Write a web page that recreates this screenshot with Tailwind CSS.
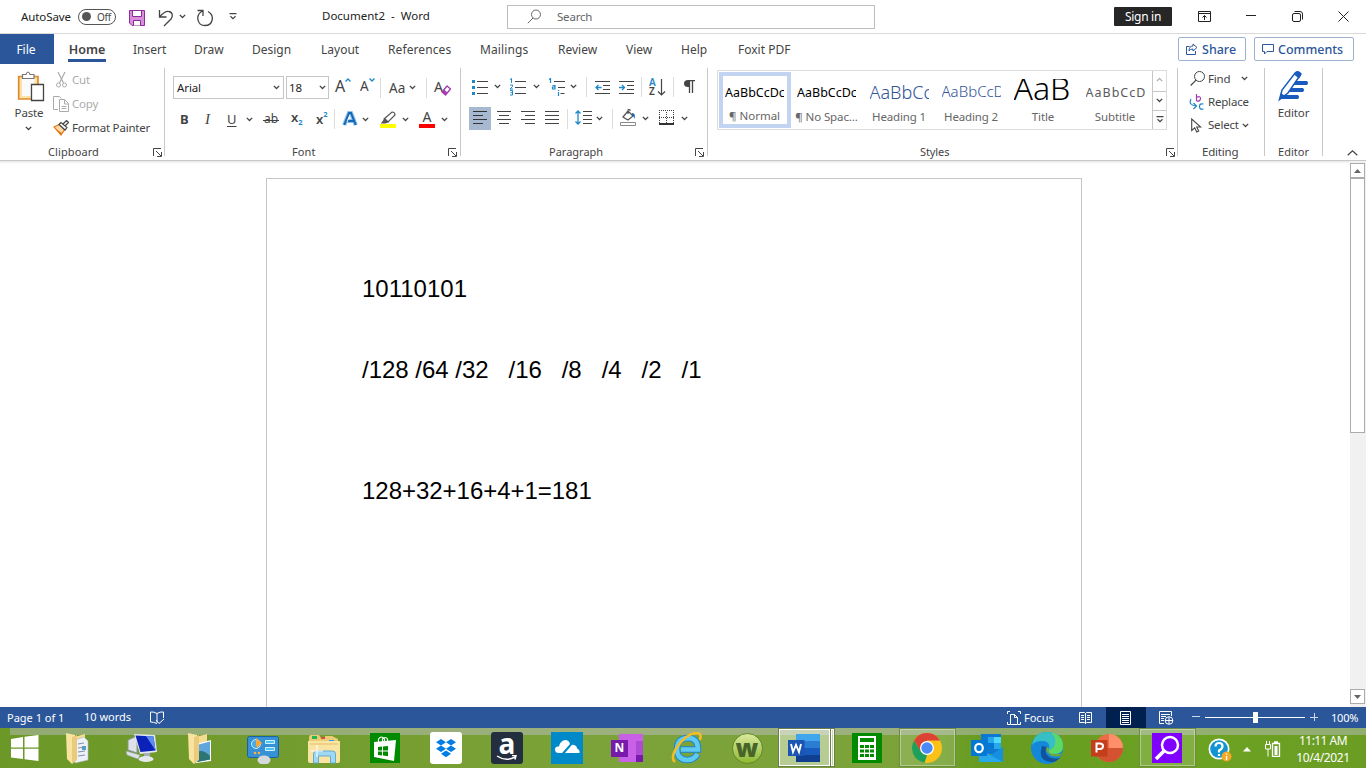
<!DOCTYPE html>
<html lang="en">
<head>
<meta charset="utf-8">
<title>Document2 - Word</title>
<script src="https://cdn.jsdelivr.net/npm/@tailwindcss/browser@4"></script>
</head>
<body class="w-[1366px] h-[768px] overflow-hidden bg-white font-['Noto_Sans','Open_Sans',sans-serif] text-[12px] leading-4 text-[#444] flex flex-col whitespace-nowrap">
<svg class="hidden">
  <symbol id="chev" viewBox="0 0 7 5"><path d="M.8 .9 3.5 3.5 6.2 .9" fill="none" stroke="#444" stroke-width="1.3"/></symbol>
  <symbol id="launch" viewBox="0 0 9 9"><path d="M.5 8V.5H8M3 3l5 5M8.500 4v4.500H4" fill="none" stroke="#444"/></symbol>
</svg>

<!-- Title bar -->
<header class="flex h-[34px] shrink-0 items-center border-b border-[#dadada] text-[11px] text-[#222]">
  <span class="ml-[21px] w-[57px] text-[11.500px] tracking-[-0.1px]">AutoSave</span>
  <span class="flex h-4 w-[38px] items-center rounded-full border border-[#555] pl-[3px]"><i class="size-[9px] rounded-full bg-[#555]"></i><span class="ml-[6px] text-[10px] tracking-[-0.3px] text-[#444]">Off</span></span>
  <svg class="ml-[13px] mt-[2px]" width="16" height="16"><path d="M.5 .5h15v15H3L.5 13z" fill="#d78fdc" stroke="#8e2b9c"/><path d="M3.500 .5h9v6h-9zM4.500 15.500v-5h7v5" fill="#fff" stroke="#8e2b9c"/></svg>
  <svg class="ml-[13px] mt-[2px]" width="17" height="18"><path d="M1.500 1v7h7M1.500 8C5 4 8 1.500 11 2.500c4 1 4 5 2 7.500l-7 7" fill="none" stroke="#444" stroke-width="1.300"/></svg>
  <svg class="ml-[4px]" width="7" height="5"><use href="#chev"/></svg>
  <svg class="ml-[10px] mt-[2px]" width="18" height="18"><path d="M1.500 1.500H7V7M6.500 2C-1 6 1 16.500 9 16.500c8 0 10-10 3-14" fill="none" stroke="#444" stroke-width="1.300"/></svg>
  <svg class="ml-[15px]" width="8" height="7"><path d="M.5 .6h7M1.500 3.200 4 5.600 6.500 3.200" fill="none" stroke="#444" stroke-width="1.200"/></svg>
  <span class="ml-[85px] mb-px w-[185px] whitespace-pre text-[11.500px]">Document2  -  Word</span>
  <div class="flex h-6 w-[368px] items-center border border-[#bdbdbd] text-[#666]">
    <svg class="ml-[19px]" width="15" height="15"><circle cx="9" cy="5.500" r="4.500" fill="none" stroke="#666"/><path d="M6 9 .8 14.200" stroke="#666"/></svg>
    <span class="ml-[15px] text-[11.500px] tracking-[-0.2px]">Search</span>
  </div>
  <span class="ml-[239px] flex h-[19px] w-[58px] items-center justify-center rounded-[1px] bg-[#262626] text-[12px] tracking-[-0.3px] text-white">Sign in</span>
  <svg class="ml-[26px]" width="13" height="11"><path d="M.5 .5h12v10H.5zM.5 2.500h12M6.500 9V4.500M4.500 6.500l2-2 2 2" fill="none" stroke="#222"/></svg>
  <svg class="ml-[35px]" width="10" height="10"><path d="M0 3.500h10" stroke="#222"/></svg>
  <svg class="ml-[36px] mb-px" width="11" height="11"><rect x=".5" y="2.500" width="8" height="8" rx="1.500" fill="none" stroke="#222"/><path d="M2.500 .5h5.500q2.500 0 2.500 2.500v5.500" fill="none" stroke="#222"/></svg>
  <svg class="ml-[35px] mb-px" width="11" height="11"><path d="M.5 .5l10 10M10.500 .5l-10 10" stroke="#222"/></svg>
</header>

<!-- Tabs -->
<nav class="flex h-[30px] shrink-0 items-center">
  <span class="flex h-full w-[54px] items-center justify-center bg-[#2b579a] pr-[2px] pt-px text-white">File</span>
  <span class="ml-[14px] mr-[27px] flex h-full w-[38px] flex-col items-center"><b class="mt-[8px] h-[17px] text-[12.500px] font-semibold">Home</b><i class="h-[3px] w-[38px] bg-[#2b579a]"></i></span>
  <span class="flex pt-[2px]"><span class="w-[61px]">Insert</span><span class="w-[58px]">Draw</span><span class="w-[69px]">Design</span><span class="w-[67px]">Layout</span><span class="w-[92px] tracking-[0.1px]">References</span><span class="w-[78px] tracking-[0.1px]">Mailings</span><span class="w-[68px]">Review</span><span class="w-[55px]">View</span><span class="w-[57px]">Help</span><span class="w-[440px]">Foxit PDF</span></span>
  <span class="flex h-6 w-[68px] items-center rounded-[2px] border border-[#9db2d2] pl-[7px] font-medium text-[#2b579a]"><svg width="12" height="12"><path d="M3.500 3.500h-3v8h9V8M7 1l4 3.500L7 8V6Q4 6 3 8q0-5 4-5z" fill="none" stroke="#2b579a"/></svg><span class="ml-1 pt-px text-[12.500px]">Share</span></span>
  <span class="ml-2 flex h-6 w-[100px] items-center rounded-[2px] border border-[#9db2d2] pl-[7px] font-medium text-[#2b579a]"><svg width="12" height="12"><path d="M.5 1.500h11v7H5L2.500 11V8.500h-2z" fill="none" stroke="#2b579a"/></svg><span class="ml-1 pt-px text-[12.500px]">Comments</span></span>
</nav>

<!-- Ribbon -->
<section class="flex h-[97px] shrink-0 border-b border-[#c8c8c8] pt-1 text-[11px]">
  <!-- Clipboard -->
  <div class="flex h-[88px] w-[165px] flex-col border-r border-[#c8c8c8]">
    <div class="flex h-[76px] shrink-0">
      <div class="flex w-[52px] flex-col items-center pl-[6px] pt-[3px]">
        <svg class="ml-[4px] shrink-0" width="28" height="32"><path d="M1.700 5.500h19.300v22.500H1.700z" fill="#fbe3a8" stroke="#e08a2c" stroke-width="1.700"/><path d="M5 8h12.500v17H5z" fill="#fafafa"/><path d="M5.500 7.500v-4h3.500q2-5 4 0h4v4z" fill="#fff" stroke="#777" stroke-width="1.200"/><path d="M14.500 13.500h12v16h-12z" fill="#fff" stroke="#444" stroke-width="1.300"/></svg>
        <span class="mt-[2px] text-[11.500px] tracking-[-0.15px]">Paste</span>
        <svg class="mt-[5px] mr-[2px]" width="7" height="5"><use href="#chev"/></svg>
      </div>
      <div class="flex flex-col text-[11.500px] tracking-[-0.2px]">
        <div class="flex h-6 items-center text-[#ababab]"><svg class="ml-1 mr-[5px]" width="11" height="16"><path d="M2 0l5.500 11M9 0 3.500 11" stroke="#ababab" stroke-width="1.200"/><circle cx="2.500" cy="13" r="2" fill="none" stroke="#ababab"/><circle cx="8.500" cy="13" r="2" fill="none" stroke="#ababab"/></svg>Cut</div>
        <div class="flex h-6 items-center text-[#ababab]"><svg class="ml-[1px] mr-[3px]" width="16" height="16"><path d="M5 13.500H.5V.5h6l2 2M6.500 3.500h5l4 4v8h-9zM11.500 4v4h4M8.500 10.500h5M8.500 12.500h5" fill="none" stroke="#ababab"/></svg>Copy</div>
        <div class="flex h-6 items-center"><svg class="ml-[1px] mr-[3px]" width="16" height="16"><path d="M1 7l6-3 5 5-4 6z" fill="#fcd9a5" stroke="#e07b1a" stroke-width="1.200"/><path d="M3 9l6 4-1 2z" fill="#e07b1a"/><path d="M6 4.500l2-2 6 5-2 2.500zM10 4l3.500-3.500 2 1.800-3 3.200" fill="#fff" stroke="#444" stroke-width="1.200"/></svg>Format Painter</div>
      </div>
    </div>
    <div class="flex items-center pl-12"><span class="w-[105px] tracking-[0.1px]">Clipboard</span><svg width="9" height="9"><use href="#launch"/></svg></div>
  </div>

  <!-- Font -->
  <div class="flex h-[88px] w-[296px] flex-col border-r border-[#c8c8c8]">
    <div class="mt-2 flex h-[23px] shrink-0 items-center pl-2">
      <div class="flex h-[23px] w-[111px] items-center border border-[#c6c6c6] px-[3px] text-[#222]"><span class="w-[100px] tracking-[-0.1px] text-[11.500px]">Arial</span><svg width="7" height="5" class="shrink-0"><use href="#chev"/></svg></div>
      <div class="ml-[2px] flex h-[23px] w-[43px] items-center border border-[#c6c6c6] pl-[2px] text-[#222]"><span class="w-[30px] text-[11.500px] tracking-[-0.2px]">18</span><svg width="7" height="5" class="shrink-0"><use href="#chev"/></svg></div>
      <div class="ml-[6px] mb-[3px] flex h-5 w-[25px] leading-5"><span class="text-[16px]">A</span><svg class="mt-[2px]" width="6" height="4"><path d="M.5 3.500 3 1l2.500 2.500" fill="none" stroke="#1e88c9" stroke-width="1.300"/></svg></div>
      <div class="mb-[3px] flex h-5 w-[20px] leading-5"><span class="text-[13.500px]">A</span><svg class="mt-[2px]" width="6" height="4"><path d="M.5 .5 3 3 5.500 .5" fill="none" stroke="#1e88c9" stroke-width="1.300"/></svg></div>
      <i class="h-5 w-px bg-[#dcdcdc]"></i>
      <span class="ml-[8px] w-[20px] text-[13.500px]">Aa</span><svg width="7" height="5"><use href="#chev"/></svg>
      <i class="ml-[10px] h-5 w-px bg-[#dcdcdc]"></i>
      <div class="ml-[7px] mb-px flex"><span class="w-[7px] text-[14px]">A</span><svg class="mt-[5px]" width="10" height="12"><path d="M1 8l5-6 3.500 3-5 6z" fill="#fff" stroke="#a33fb0" stroke-width="1.400"/><path d="M1 8l2-2.400 3.500 3-2 2.400z" fill="#a33fb0"/></svg></div>
    </div>
    <div class="mt-[8px] flex h-6 shrink-0 items-center pl-[15px] text-[13px]">
      <b class="w-6 pb-px">B</b><span class="w-[22px] pb-px pl-px font-['Liberation_Serif',serif] text-[15px] italic">I</span><span class="w-[20px] pb-px pl-px underline underline-offset-2">U</span><svg width="7" height="5"><use href="#chev"/></svg>
      <span class="ml-[10px] flex w-[28px]"><span class="w-[16px] bg-[linear-gradient(#444,#444)] bg-[length:100%_1px] bg-[position:0_9px] bg-no-repeat text-center text-[12px]">ab</span></span>
      <span class="flex w-[25px]"><b class="font-semibold">x</b><span class="mt-[5px] text-[7.500px] font-bold text-[#1e88c9]">2</span></span>
      <span class="flex w-[18px]"><b class="font-semibold">x</b><span class="mt-[-5px] text-[7.500px] font-bold text-[#1e88c9]">2</span></span>
      <i class="h-5 w-px bg-[#dcdcdc]"></i>
      <svg class="ml-[7px]" width="16" height="16"><path d="M2.200 14 7 2h2l4.800 12M4.500 10h7" fill="none" stroke="#8cc0ea" stroke-width="4.200"/><path d="M2.200 14 7 2h2l4.800 12M4.500 10h7" fill="none" stroke="#1467b5" stroke-width="2"/><path d="M8 4 5 11" stroke="#fff" stroke-width="1"/></svg>
      <svg class="ml-1" width="7" height="5"><use href="#chev"/></svg>
      <svg class="ml-[11px]" width="16" height="17"><path d="M4 8l8-7q3 0 3 3L8 11H5zM5 8l3 3-3 1H2z" fill="#fff" stroke="#555" stroke-width="1.200"/><path d="M5 7.500 8.500 11 6 12H2z" fill="#555"/><path d="M0 13h16v4H0z" fill="#ff0"/></svg>
      <svg class="ml-[6px]" width="7" height="5"><use href="#chev"/></svg>
      <span class="ml-[10px] flex h-[17px] w-4 flex-col items-center"><span class="h-[13px] text-[14px] leading-[11px]">A</span><i class="h-1 w-4 bg-[#f00]"></i></span>
      <svg class="ml-[6px]" width="7" height="5"><use href="#chev"/></svg>
    </div>
    <div class="mt-[13px] flex items-center pl-[127px]"><span class="w-[156px] tracking-[0.1px]">Font</span><svg width="9" height="9"><use href="#launch"/></svg></div>
  </div>

  <!-- Paragraph -->
  <div class="flex h-[88px] w-[247px] flex-col border-r border-[#c8c8c8]">
    <div class="mt-[7px] flex h-[23px] shrink-0 items-center pl-[11px]">
      <svg width="16" height="16"><path d="M5 2.500h11M5 8.500h11M5 14.500h11" stroke="#444"/><path d="M0 1h3v3H0zM0 7h3v3H0zM0 13h3v3H0z" fill="#1e88c9"/></svg><svg class="ml-[6px]" width="7" height="5"><use href="#chev"/></svg>
      <svg class="ml-[9px]" width="16" height="18"><path d="M5 3.500h11M5 9.500h11M5 15.500h11" stroke="#444"/><path d="M0 1.500l1.500-1V5M0 7h2.500v1.500L0 11h3M0 12.500h2.500V17H0M.5 14.700h2" fill="none" stroke="#1e88c9"/></svg><svg class="ml-[7px]" width="7" height="5"><use href="#chev"/></svg>
      <svg class="ml-[9px]" width="16" height="18"><path d="M5 3.500h11M9 9.500h7M11.500 15.500h4" stroke="#444"/><path d="M0 1.500l1.500-1V5M3.500 7.500H6V11H3.500V9H6M9.500 12v1M9.500 14v4" fill="none" stroke="#1e88c9" stroke-width="1.200"/></svg><svg class="ml-[5px]" width="7" height="5"><use href="#chev"/></svg>
      <i class="ml-[9px] h-5 w-px bg-[#dcdcdc]"></i>
      <svg class="ml-2" width="15" height="14"><path d="M0 1.500h15M8 5.500h7M8 9.500h7M0 13.500h15" stroke="#444"/><path d="M6.500 7.500H1M3.500 5 1 7.500 3.500 10" fill="none" stroke="#1e88c9" stroke-width="1.300"/></svg>
      <svg class="ml-[9px]" width="15" height="14"><path d="M0 1.500h15M8 5.500h7M8 9.500h7M0 13.500h15" stroke="#444"/><path d="M0 7.500h5.500M3 5l2.500 2.500L3 10" fill="none" stroke="#1e88c9" stroke-width="1.300"/></svg>
      <i class="ml-[7px] h-5 w-px bg-[#dcdcdc]"></i>
      <div class="ml-[7px] flex"><span class="flex w-[8px] flex-col text-[10px] font-semibold leading-[9px]"><span class="text-[#1e88c9]">A</span><span>Z</span></span><svg class="mt-px" width="9" height="17"><path d="M4.500 0v16M1 12.500 4.500 16 8 12.500" fill="none" stroke="#444" stroke-width="1.200"/></svg></div>
      <i class="ml-[7px] h-5 w-px bg-[#dcdcdc]"></i>
      <svg class="ml-[10px] mb-px" width="11" height="13"><path d="M5.500 0v13M8.500 0v13M4 .6h7" stroke="#444" stroke-width="1.300"/><path d="M6 0v7H4Q0 7 0 3.500T4 0z" fill="#444"/></svg>
    </div>
    <div class="mt-[9px] flex h-[23px] shrink-0 items-center pl-2">
      <span class="flex h-[23px] w-[22px] items-center justify-center bg-[#a6b9d1] pb-[2px]"><svg width="14" height="13"><path d="M0 .5h14M0 4.500h10M0 8.500h14M0 12.500h10" stroke="#333"/></svg></span>
      <svg class="mb-[2px] ml-[6px]" width="14" height="13"><path d="M0 .5h14M2 4.500h10M0 8.500h14M2 12.500h10" stroke="#444"/></svg>
      <svg class="mb-[2px] ml-[10px]" width="14" height="13"><path d="M0 .5h14M4 4.500h10M0 8.500h14M4 12.500h10" stroke="#444"/></svg>
      <svg class="mb-[2px] ml-[10px]" width="14" height="13"><path d="M0 .5h14M0 4.500h14M0 8.500h14M0 12.500h14" stroke="#444"/></svg>
      <i class="ml-[8px] h-5 w-px bg-[#dcdcdc]"></i>
      <svg class="mb-[2px] ml-[7px]" width="17" height="15"><path d="M8 1.500h9M8 5.500h9M8 9.500h9M8 13.500h9" stroke="#444"/><path d="M3 1v13M.5 3.500 3 1l2.500 2.500M.5 11.500 3 14l2.500-2.500" fill="none" stroke="#1e88c9" stroke-width="1.300"/></svg>
      <svg class="ml-[4px]" width="7" height="5"><use href="#chev"/></svg>
      <i class="ml-[9px] h-5 w-px bg-[#dcdcdc]"></i>
      <svg class="mb-[2px] ml-[7px]" width="17" height="17"><path d="M3 8l5-6 5 5-5 4zM8 5V1q2-2 2 1" fill="#fff" stroke="#555" stroke-width="1.200"/><path d="M12 4q4 0 2.500 6-1-4-2.500-3z" fill="#1565b0"/><path d="M.5 13.500h15v3H.5z" fill="#fff" stroke="#888"/></svg>
      <svg class="ml-[5px]" width="7" height="5"><use href="#chev"/></svg>
      <svg class="mb-[2px] ml-[10px]" width="15" height="15"><path d="M.5 0v13M14.500 0v13M0 .5h15M7.500 2v11M0 7.500h15" stroke="#444" stroke-dasharray="1 1"/><path d="M0 14h15" stroke="#000" stroke-width="1.600"/></svg>
      <svg class="ml-[7px]" width="7" height="5"><use href="#chev"/></svg>
    </div>
    <div class="mt-[14px] flex items-center pl-[88px]"><span class="w-[146px]">Paragraph</span><svg width="9" height="9"><use href="#launch"/></svg></div>
  </div>

  <!-- Styles -->
  <div class="flex h-[88px] w-[470px] flex-col border-r border-[#c8c8c8] pl-[9px]">
    <div class="mt-[2px] flex h-[60px] w-[450px] shrink-0 border border-[#dcdcdc] pl-px text-[11.500px] text-[#666]">
      <div class="mt-px flex h-[56px] w-[72px] flex-col items-center border-4 border-[#c2d4f2]"><span class="mr-px mt-[6px] h-[27px] w-[59px] overflow-hidden text-[12.500px] leading-[22px] text-black">AaBbCcDc</span><span class="mr-px">¶ Normal</span></div>
      <div class="flex w-[72px] flex-col items-center pt-[11px] pr-px"><span class="h-[27px] w-[59px] overflow-hidden text-[12.500px] leading-[22px] text-black">AaBbCcDc</span><span class="tracking-[-0.1px]">¶ No Spac...</span></div>
      <div class="flex w-[72px] flex-col items-center pt-[10px]"><span class="h-[28px] w-[59px] overflow-hidden text-[18px] font-light leading-[22px] text-[#2f5496]">AaBbCc</span><span class="tracking-[-0.15px]">Heading 1</span></div>
      <div class="flex w-[72px] flex-col items-center pt-[11px]"><span class="h-[27px] w-[59px] overflow-hidden text-[15px] font-light leading-[19px] text-[#2f5496]">AaBbCcD</span><span class="tracking-[-0.15px]">Heading 2</span></div>
      <div class="flex w-[72px] flex-col items-center pt-[8px]"><span class="h-[30px] w-[59px] overflow-hidden text-[32px] font-light leading-[18px] text-black">AaB</span><span class="tracking-[-0.1px]">Title</span></div>
      <div class="flex w-[73px] flex-col items-center pr-px pt-[11px]"><span class="h-[27px] w-[59px] overflow-hidden text-[12.500px] leading-[22px] tracking-[1px] text-[#5a5a5a]">AaBbCcD</span><span class="tracking-[-0.1px]">Subtitle</span></div>
      <div class="flex w-[14px] flex-col border-l border-[#c6c6c6]">
        <span class="flex h-5 items-center justify-center pb-[3px]"><svg class="rotate-180 opacity-40" width="7" height="5"><use href="#chev"/></svg></span>
        <span class="flex h-5 items-center justify-center border-y border-[#c6c6c6] pb-px"><svg width="7" height="5"><use href="#chev"/></svg></span>
        <span class="flex h-[18px] items-center justify-center pb-[2px]"><svg width="8" height="7"><path d="M.5 .6h7M1.500 3.200 4 5.600 6.500 3.200" fill="none" stroke="#444" stroke-width="1.200"/></svg></span>
      </div>
    </div>
    <div class="mt-[14px] flex items-center pl-[203px]"><span class="w-[246px] tracking-[-0.1px]">Styles</span><svg width="9" height="9"><use href="#launch"/></svg></div>
  </div>

  <!-- Editing -->
  <div class="flex h-[88px] w-[87px] flex-col border-r border-[#c8c8c8] text-[11.500px] tracking-[-0.2px]">
    <div class="flex h-[21px] shrink-0 items-center pl-[12px]"><svg width="15" height="15" class="mr-[3px]"><circle cx="9.500" cy="5.500" r="5" fill="none" stroke="#444"/><path d="M6 9.200 .7 14.500" stroke="#444" stroke-width="1.200"/></svg><span class="w-[33px]">Find</span><svg width="7" height="5"><use href="#chev"/></svg></div>
    <div class="mt-px flex h-6 shrink-0 items-center pl-[11px]"><svg width="15" height="17" class="mr-1"><path d="M7.500 0v7M7.500 3.500q4-2 4 1t-4 2.500" fill="none" stroke="#a33fb0" stroke-width="1.200"/><path d="M14.500 10q-4-1-4 2.500t4 2.500M2 5q-3 6 5 7M4.500 9 7.500 12l-3 3" fill="none" stroke="#1e88c9" stroke-width="1.200"/></svg>Replace</div>
    <div class="flex h-[22px] shrink-0 items-center pl-[13px]"><svg width="11" height="15" class="mr-[6px]"><path d="M.7 1v11.500l3-2.700 2 4.200 2-1-2-4h4z" fill="#fff" stroke="#444" stroke-width="1.100"/></svg><span class="w-[34px]">Select</span><svg width="7" height="5"><use href="#chev"/></svg></div>
    <div class="mt-[8px] pl-[24px]">Editing</div>
  </div>

  <!-- Editor -->
  <div class="flex h-[88px] w-[58px] flex-col items-center border-r border-[#c8c8c8]">
    <svg class="mt-[2px] shrink-0" width="31" height="32"><path d="M15 11h14q2 2 0 4H12zM11 18h14q2 2 0 4H7zM4 25h16q2 2 0 4H1z" fill="#185abd"/><path d="M1.500 29.500 4 20 17.500 2.500q3-2 5.500 1.500L10 23z" fill="#fff" stroke="#185abd" stroke-width="1.500"/><path d="M1 30l2-7 4 3zM16 4.500l5 4 2-3q0-4-4-4z" fill="#185abd"/></svg>
    <span class="mt-[3px] text-[11.500px] tracking-[-0.1px]">Editor</span>
    <span class="mt-[23px]">Editor</span>
  </div>
  <svg class="ml-[24px] mt-[82px]" width="11" height="6"><path d="M.7 5.300 5.500 .8l4.800 4.500" fill="none" stroke="#444" stroke-width="1.200"/></svg>
</section>

<!-- Document -->
<main class="flex h-[546px] shrink-0 justify-between">
  <div class="flex w-[1350px] flex-col">
    <i class="h-[3px] shrink-0 bg-linear-to-b from-[#e8e8e8] to-white"></i>
    <article class="ml-[266px] mt-[14px] w-[816px] flex-1 border border-b-0 border-[#c6c6c6] pl-[95px] pt-[96px] font-['Liberation_Sans',Arial,sans-serif] text-[24px] leading-[28px] text-black">
      <p class="whitespace-pre">10110101</p>
      <p class="mt-[53px] whitespace-pre tracking-[-0.02px]">/128 /64 /32   /16   /8   /4   /2   /1</p>
      <p class="mt-[93px] whitespace-pre tracking-[-0.03px]">128+32+16+4+1=181</p>
    </article>
  </div>
  <div class="flex w-4 flex-col bg-[#f1f1f1] pb-[3px] pr-px pt-[2px]">
    <span class="flex h-[15px] items-center justify-center border border-[#ababab] bg-white"><svg width="7" height="4"><path d="M0 4 3.500 0 7 4z" fill="#666"/></svg></span>
    <span class="h-[255px] border border-[#ababab] bg-white"></span>
    <span class="mt-auto flex h-[15px] items-center justify-center border border-[#ababab] bg-white"><svg width="7" height="4"><path d="M0 0h7L3.500 4z" fill="#666"/></svg></span>
  </div>
</main>

<!-- Status bar -->
<footer class="flex h-[21px] shrink-0 items-center bg-[#2b579a] text-[11px] text-white">
  <span class="ml-[7px] w-[77px] pt-px">Page 1 of 1</span><span class="w-[66px] pb-px">10 words</span>
  <svg width="15" height="14"><path d="M7 2.500v9M7 2.500Q4 .5 .5 1v10q3 0 6.500 1.500M7 2.500Q10 .5 13.500 1v6M6 9l3 3.500L14 8" fill="none" stroke="#fff"/></svg>
  <svg class="ml-[842px]" width="14" height="14"><path d="M3 .5H.5V3M11 .5h2.500V3M3 13.500H.5V11M11 13.500h2.500V11M3.500 3.500h4l3 3v7h-7zM7.500 3.500v3h3" fill="none" stroke="#fff"/></svg>
  <span class="ml-[3px] w-[55px] pt-px">Focus</span>
  <svg width="13" height="13"><path d="M6.500 2v11M.5 1.500h5l1 1 1-1h5v10h-5l-1 1-1-1h-5zM2 4.500h3M2 6.500h3M2 8.500h3M8 4.500h3M8 6.500h3M8 8.500h3" fill="none" stroke="#fff"/></svg>
  <span class="ml-[14px] flex h-full w-10 items-center justify-center bg-[#002050] pr-px"><svg width="11" height="14"><path d="M.5 .5h10v13H.5zM2 3.500h7M2 5.500h7M2 7.500h7M2 9.500h7M2 11.500h7" fill="none" stroke="#fff"/></svg></span>
  <svg class="ml-[13px]" width="15" height="14"><path d="M5 12.500H.5V.5h12V5M2 3.500h9M2 5.500h5M2 7.500h3M2 9.500h3" fill="none" stroke="#fff"/><circle cx="10" cy="9.500" r="3.800" fill="#2b579a" stroke="#fff"/><path d="M6 9.500h8M10 6v7" stroke="#fff"/></svg>
  <svg class="ml-[18px]" width="9" height="9"><path d="M0 3.500h8" stroke="#cfd9e8"/></svg>
  <span class="ml-[4px] flex h-[11px] w-[100px] items-center bg-[linear-gradient(#fff,#fff)] bg-[length:100%_1px] bg-center bg-no-repeat"><i class="ml-[48px] h-[11px] w-[5px] bg-white"></i></span>
  <svg class="ml-[5px]" width="9" height="9"><path d="M0 4.500h8M4.500 0v8" stroke="#cfd9e8"/></svg>
  <span class="ml-[12px] tracking-[-0.2px]">100%</span>
</footer>

<!-- Taskbar -->
<footer class="flex h-10 shrink-0 items-stretch bg-[linear-gradient(90deg,transparent_10px,rgba(200,195,220,.42)_10px),linear-gradient(90deg,#6b9826,#749d2f_25%,#7ca339_45%,#7ca339_65%,#679c20_72%,#6ca222_88%,#6b9d24)] bg-[length:100%_7px,100%_100%] bg-no-repeat">
  <span class="flex w-[50px] items-center pl-[11px]"><svg width="28" height="26"><path d="M0 4 12 2v10.500H0zM13.500 1.800 27.500 0v12.500h-14zM0 13.800h12V24L0 22.500zM13.500 13.800h14V26l-14-1.800z" fill="#fff"/></svg></span>
  <span class="flex w-[61px] items-center justify-center"><svg width="32" height="32"><path d="M9 5l11-3v24l-11 4z" fill="#f4dc91"/><path d="M10 8l9-3 4 4v19l-13 3z" fill="#eef2f7" stroke="#a9b8c9" stroke-width=".6"/><path d="M13 12l6-1M13 16l7-1M13 20l7-1M13 24l7-1" stroke="#7c8fb0"/><path d="M17 14h4v4h-4z" fill="#5b9ac4"/><path d="M1 1l9 2v25l-3 4-5-5z" fill="#f8e3a1"/><path d="M7 5l5-2v25l-5 4z" fill="#eacb7c"/></svg></span>
  <span class="flex w-[61px] items-center justify-center"><svg width="32" height="32"><path d="M2 8l9-4v17l-9-3z" fill="#dfe3e8" stroke="#8a949f"/><path d="M0 19l14 4-2 4-11-4z" fill="#dde2e6" stroke="#9aa3aa" stroke-width=".6"/><path d="M8 2l21 1 2 17-17 2z" fill="#e3e7ee"/><path d="M9.500 3.500l18 1 2 14-15 1.500z" fill="#0b22b8"/><path d="M20 4l7.500.5 2 14z" fill="#5d8df1"/><path d="M18 21h6v5h-6z" fill="#a9b0b8"/><ellipse cx="20" cy="27" rx="7.500" ry="3" fill="#e6e9ec"/></svg></span>
  <span class="flex w-[61px] items-center justify-center"><svg width="32" height="32"><path d="M9 5l11-3v24l-11 4z" fill="#f4dc91"/><path d="M9 12l15-4v21l-15 2z" fill="#fff"/><path d="M10 13l13-3.500v18L10 30z" fill="#5fa6dd"/><path d="M10 20q6-3 13 4v3.500L10 30z" fill="#2d7474"/><path d="M1 1l9 2v25l-3 4-5-5z" fill="#f8e3a1"/><path d="M7 5l5-2v25l-5 4z" fill="#eacb7c"/></svg></span>
  <span class="flex w-[61px] items-center justify-center pr-px"><svg width="32" height="32"><rect x=".5" y="4.500" width="31" height="21" rx="2" fill="#3791d6" stroke="#1c619d"/><circle cx="9" cy="12" r="4.500" fill="#4aa9e6" stroke="#c8ecff"/><path d="M9 12V6l6 5-5 5z" fill="#fba932"/><path d="M18.500 8.500h9v3h-9zM18.500 15.500h9v3h-9z" fill="#49c7f1" stroke="#d4f1ff"/><circle cx="8" cy="21" r="1.300" fill="#ffad3e"/><circle cx="12" cy="21" r="1.300" fill="#ffad3e"/><ellipse cx="17" cy="28" rx="6.500" ry="4.500" fill="#d5d9dc"/></svg></span>
  <span class="flex w-[61px] items-center justify-center pr-[2px]"><svg width="32" height="32"><path d="M1 8V5q0-2 2-2h8l2 3h4V4h7l6 3v8H1z" fill="#eccb76"/><path d="M4 4h5v3H4z" fill="#29b556"/><path d="M13 5h4v2h-4z" fill="#e04c3c"/><path d="M21 8h5v2h-5z" fill="#3399ec"/><path d="M0 9h32v20q0 2-2 2H2q-2 0-2-2z" fill="#f9e4a2"/><path d="M2 12h28" stroke="#e3bf68"/><path d="M5.500 31V22q0-3 3-3h16q3 0 3 3v9h-5v-7H10.500v7z" fill="#9fd8f2" stroke="#65accf"/><path d="M9 13v12M3 19h12" stroke="#fff"/></svg></span>
  <span class="flex w-[61px] items-center justify-center pr-px"><svg width="30" height="30"><path d="M0 0h30v30H0z" fill="#008a00"/><path d="M8.500 9V6q3-4 6 0v3M12.500 9V6q3-3 5 0v2" fill="none" stroke="#fff" stroke-width="1.200"/><path d="M4 9l22-2-2 21-20-4z" fill="#fff"/><path d="M8 14l4-.5v4H8zM13 13.400l5-.4v4.500h-5zM8 18.500h4v4l-4-.6zM13 18.500h5v4.700l-5-.6z" fill="#008a00"/></svg></span>
  <span class="flex w-[61px] items-center justify-center pr-px"><svg width="32" height="32"><rect width="32" height="32" rx="3" fill="#fff"/><path d="M11 7l5 3.300-5 3.300-5-3.300zM21 7l5 3.300-5 3.300-5-3.300zM11 13.600l5 3.200-5 3.300-5-3.300zM21 13.600l5 3.200-5 3.300-5-3.300zM16 18.500l5 3.200-5 3.500-5-3.500z" fill="#007ee5"/></svg></span>
  <span class="flex w-[60px] items-center justify-center"><span class="flex size-8 flex-col items-center rounded-[3px] bg-[#232f3e]"><b class="h-[23px] text-[28px] leading-[22px] text-white">a</b><svg width="22" height="6"><path d="M1 1q9 6 18 1M16 .5l4 0-1 4" fill="none" stroke="#fff" stroke-width="1.500"/></svg></span></span>
  <span class="flex w-[60px] items-center justify-center"><svg width="32" height="32"><path d="M0 0h32v32H0z" fill="#0089c9"/><path d="M8 21q-4 0-4-3.500T8 14.500Q9 9 14 8q4 0 5 4l-8 9zM14 21l6-7q1-2 3-1 3 1 3 3.500 3 1 2.500 4.500z" fill="#fff"/></svg></span>
  <span class="flex w-[60px] items-center justify-center"><span class="flex h-7 w-8 items-center bg-[linear-gradient(90deg,transparent_8px,#c960e8_8px_25px,transparent_25px)]"><b class="flex size-[17px] items-center justify-center bg-[#7719aa] text-[12px] text-white">N</b><i class="ml-2 flex h-7 w-[7px] flex-col"><i class="h-[7px] bg-[#c960e8]"></i><i class="h-[14px] bg-[#ae4bd5]"></i><i class="h-[7px] bg-[#7719aa]"></i></i></span></span>
  <span class="flex w-[60px] items-center justify-center"><svg width="32" height="32"><path d="M26.500 22Q23 28 16 28q-10-.5-10-11T17 6q10 0 10 11.500H10" fill="none" stroke="#1d87ca" stroke-width="6.500"/><path d="M26.500 22Q23 28 16 28q-10-.5-10-11T17 6q10 0 10 11.500H10" fill="none" stroke="#5fcaf3" stroke-width="4.500"/><path d="M4 30Q-1 26 6 15 16 1 26 1q5 0 3 7" fill="none" stroke="#f6bd23" stroke-width="2.500"/></svg></span>
  <span class="flex w-[60px] items-center justify-center"><span class="flex size-[31px] items-center justify-center rounded-full border border-[#638a28] bg-linear-to-b from-[#d9e99a] to-[#8eb92d] pb-[3px] text-[25px] font-black text-[#47652a]">w</span></span>
  <span class="flex w-[60px] items-stretch pl-[1px]"><span class="flex h-[39px] w-[53px] items-center justify-center border border-[#6b7d48] bg-white/45 pr-px shadow-[inset_0_0_0_1px_#fff]"><svg width="32" height="28"><path d="M8 0h24v7H8z" fill="#41a5ee"/><path d="M8 7h24v7H8z" fill="#2b7cd3"/><path d="M8 14h24v7H8z" fill="#185abd"/><path d="M8 21h24v7H8z" fill="#103f91"/><path d="M0 6h16.500v16H0z" fill="#1b54b3"/><path d="M3 10l2 8 3-7 3 7 2-8" fill="none" stroke="#fff" stroke-width="1.900"/></svg></span><i class="h-[39px] w-[4px] border border-[#6b7d48] border-l-0 bg-white/50 shadow-[inset_0_0_0_1px_#fff]"></i></span>
  <span class="flex w-[60px] items-center justify-center"><svg width="30" height="30"><path d="M0 0h30v30H0z" fill="#008a00"/><path d="M6 3h18v24H6z" fill="#fff"/><path d="M8 5h14v4H8zM8 12h4v3H8zM13 12h4v3h-4zM18 12h4v3h-4zM8 16.500h4v3H8zM13 16.500h4v3h-4zM18 16.500h4v3h-4zM8 21h4v3H8zM13 21h4v3h-4zM18 21h4v3h-4z" fill="#008a00"/></svg></span>
  <span class="flex w-[60px] items-start justify-center"><span class="flex h-[39px] w-[57px] items-center justify-center border border-[#708c42] bg-white/15 shadow-[inset_0_0_0_1px_rgba(255,255,255,.35)]"><svg width="30" height="30" viewBox="0 0 30 30"><circle cx="15" cy="15" r="15" fill="#fbc116"/><path d="M2 7.500A15 15 0 0 1 28 7.500H15L9 19z" fill="#dc4334"/><path d="M2 7.500 9 18.500 15 22.500 12.500 29.800A15 15 0 0 1 2 7.500z" fill="#1da05c"/><circle cx="15" cy="15" r="7" fill="#fff"/><circle cx="15" cy="15" r="5.700" fill="#4a8af4"/></svg></span></span>
  <span class="flex w-[60px] items-center justify-center"><svg width="32" height="28"><path d="M10 0h20v20H10z" fill="#0f78d4"/><path d="M17 3h6v6h-6zM23 9h7v6h-7z" fill="#28a8ea"/><path d="M23 3h7v6h-7z" fill="#50d9ff"/><path d="M17 9h6v6h-6z" fill="#0078d4"/><path d="M8 15l12 6 12-8v15H8z" fill="#1490df"/><path d="M8 15l24 13H8z" fill="#28a8ea"/><path d="M0 6h16v16H0z" fill="#0078d4"/><ellipse cx="8" cy="14" rx="3.800" ry="4.200" fill="none" stroke="#fff" stroke-width="2.200"/></svg></span>
  <span class="flex w-[60px] items-center justify-center"><svg width="32" height="32"><circle cx="16" cy="16" r="16" fill="#1387d8"/><path d="M1 13Q3 0 17 0q15 1 15 14 0 8-9 8-6 0-5-4Q20 9 11 9 4 9 1 13z" fill="#36bfc5"/><path d="M20 .5q12 3 12 13.500 0 8-9 8-6 0-5-4 4 0 6-6T20 .5z" fill="#5bd967"/><path d="M11 14q-5 16 11 16 4-1 7-4-9 2-13-3-3-4 0-8z" fill="#10539c"/><path d="M16 15q-2 3 1 6 4 5 12 3l2-3q-5 2-10 1-4-1-3-4 1-2-2-3z" fill="#74a637"/></svg></span>
  <span class="flex w-[60px] items-center justify-center"><svg width="32" height="28"><circle cx="18" cy="14" r="14" fill="#ed6c47"/><path d="M18 0a14 14 0 0 1 14 14H18z" fill="#ff8f6b"/><path d="M4 14h28a14 14 0 0 1-28 0z" fill="#d35230"/><path d="M0 6h16.500v16.500H0z" fill="#c43e1c"/><path d="M5.500 18.500v-9H9q3 0 3 2.700T9 15H5.500" fill="none" stroke="#fff" stroke-width="2"/></svg></span>
  <span class="flex w-[60px] items-start justify-center"><span class="flex h-[39px] w-[57px] items-center justify-center border border-[#708c42] bg-white/15 shadow-[inset_0_0_0_1px_rgba(255,255,255,.35)]"><svg width="30" height="30"><path d="M0 0h30v30H0z" fill="#8000ff"/><circle cx="18" cy="12" r="8" fill="none" stroke="#fff" stroke-width="2.500"/><path d="M12.500 17.500 4 26" stroke="#fff" stroke-width="3.500"/></svg></span></span>
  <svg class="ml-[11px] mt-[10px] shrink-0" width="25" height="24"><circle cx="11" cy="11" r="10.500" fill="#fff"/><circle cx="11" cy="11" r="8.800" fill="#1194d2"/><path d="M7.500 8.500q0-3.500 3.500-3.500t3.500 3-3.500 4.500v2M11 16v2" fill="none" stroke="#fff" stroke-width="2.200"/><circle cx="18.500" cy="18.500" r="5" fill="#f5a823"/><path d="M18.500 15.500v1.300M18.500 18v4" stroke="#fff" stroke-width="1.400"/></svg>
  <svg class="ml-[10px] mt-[19px] shrink-0" width="8" height="5"><path d="M0 4.500 4 0l4 4.500z" fill="#fff"/></svg>
  <svg class="ml-[14px] mt-[13px] shrink-0" width="16" height="16"><path d="M1.500 0v3M4.500 0v3M3 8v7.500" stroke="#fff"/><path d="M.5 3.500h5v4.500h-5z" fill="none" stroke="#fff"/><path d="M7.500 2.500h7v13h-7zM9 1h4" fill="none" stroke="#fff" stroke-width="1.300"/><path d="M9.500 5h3v9h-3z" fill="#fff"/></svg>
  <div class="ml-[8px] mt-[4px] flex w-[68px] flex-col items-center text-[12px] leading-[17px] text-white"><span class="tracking-[-0.55px]">11:11 AM</span><span class="tracking-[-0.4px]">10/4/2021</span></div>
</footer>
</body>
</html>
